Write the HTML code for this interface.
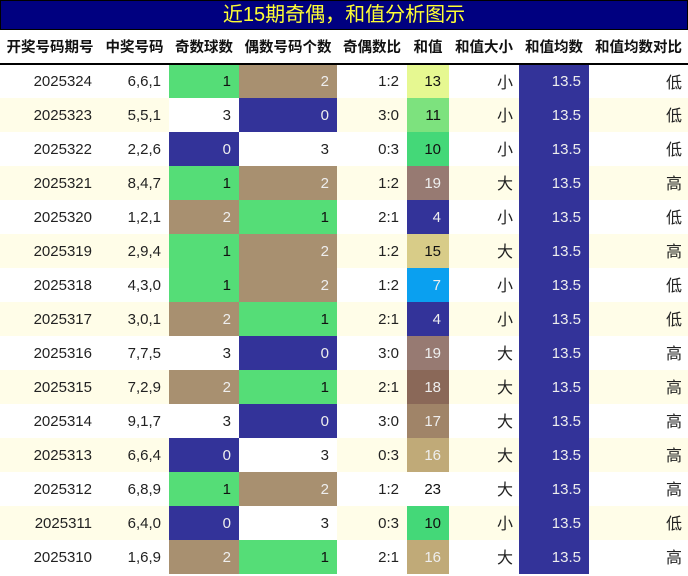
<!DOCTYPE html>
<html><head><meta charset="utf-8"><style>
*{margin:0;padding:0;box-sizing:border-box}
body{width:688px;height:576px;background:#fff;font-family:"Liberation Sans","Noto Sans CJK SC",sans-serif;overflow:hidden}
.title{height:30px;background:#000080;border:1px solid #000;color:#ffff33;font-size:20px;text-align:center;line-height:28px;padding-left:0}
table{border-collapse:collapse;table-layout:fixed;width:688px}
th{height:34px;font-size:14.5px;font-weight:bold;color:#111;border-bottom:2px solid #000;text-align:center;white-space:nowrap}
td{height:34px;font-size:15px;color:#222;text-align:right;padding-right:8px;white-space:nowrap}
tr.a td{background:#fffde8}
td.g{background:#55dd77 !important;color:#111}
td.t{background:#a89070 !important;color:#eee}
td.n{background:#333399 !important;color:#eee}
td.w{background:#fff !important}
td.cj{font-size:16px;padding-right:6px;padding-bottom:2px}
</style></head><body>
<div class="title">近15期奇偶，和值分析图示</div>
<table>
<colgroup><col style="width:100px"><col style="width:69px"><col style="width:70px"><col style="width:98px"><col style="width:70px"><col style="width:42px"><col style="width:70px"><col style="width:70px"><col style="width:99px"></colgroup>
<tr><th>开奖号码期号</th><th>中奖号码</th><th>奇数球数</th><th>偶数号码个数</th><th>奇偶数比</th><th>和值</th><th>和值大小</th><th>和值均数</th><th>和值均数对比</th></tr>
<tr><td>2025324</td><td>6,6,1</td><td class="g">1</td><td class="t">2</td><td>1:2</td><td style="background:#e6f891;color:#111">13</td><td class="cj">小</td><td class="n">13.5</td><td class="cj">低</td></tr>
<tr class="a"><td>2025323</td><td>5,5,1</td><td class="w">3</td><td class="n">0</td><td>3:0</td><td style="background:#7de27e;color:#111">11</td><td class="cj">小</td><td class="n">13.5</td><td class="cj">低</td></tr>
<tr><td>2025322</td><td>2,2,6</td><td class="n">0</td><td class="w">3</td><td>0:3</td><td style="background:#44d878;color:#111">10</td><td class="cj">小</td><td class="n">13.5</td><td class="cj">低</td></tr>
<tr class="a"><td>2025321</td><td>8,4,7</td><td class="g">1</td><td class="t">2</td><td>1:2</td><td style="background:#977a72;color:#eee">19</td><td class="cj">大</td><td class="n">13.5</td><td class="cj">高</td></tr>
<tr><td>2025320</td><td>1,2,1</td><td class="t">2</td><td class="g">1</td><td>2:1</td><td class="n">4</td><td class="cj">小</td><td class="n">13.5</td><td class="cj">低</td></tr>
<tr class="a"><td>2025319</td><td>2,9,4</td><td class="g">1</td><td class="t">2</td><td>1:2</td><td style="background:#d8cc88;color:#111">15</td><td class="cj">大</td><td class="n">13.5</td><td class="cj">高</td></tr>
<tr><td>2025318</td><td>4,3,0</td><td class="g">1</td><td class="t">2</td><td>1:2</td><td style="background:#0aa0f0;color:#eee">7</td><td class="cj">小</td><td class="n">13.5</td><td class="cj">低</td></tr>
<tr class="a"><td>2025317</td><td>3,0,1</td><td class="t">2</td><td class="g">1</td><td>2:1</td><td class="n">4</td><td class="cj">小</td><td class="n">13.5</td><td class="cj">低</td></tr>
<tr><td>2025316</td><td>7,7,5</td><td class="w">3</td><td class="n">0</td><td>3:0</td><td style="background:#977a72;color:#eee">19</td><td class="cj">大</td><td class="n">13.5</td><td class="cj">高</td></tr>
<tr class="a"><td>2025315</td><td>7,2,9</td><td class="t">2</td><td class="g">1</td><td>2:1</td><td style="background:#8a6858;color:#eee">18</td><td class="cj">大</td><td class="n">13.5</td><td class="cj">高</td></tr>
<tr><td>2025314</td><td>9,1,7</td><td class="w">3</td><td class="n">0</td><td>3:0</td><td style="background:#a08468;color:#eee">17</td><td class="cj">大</td><td class="n">13.5</td><td class="cj">高</td></tr>
<tr class="a"><td>2025313</td><td>6,6,4</td><td class="n">0</td><td class="w">3</td><td>0:3</td><td style="background:#c0aa78;color:#eee">16</td><td class="cj">大</td><td class="n">13.5</td><td class="cj">高</td></tr>
<tr><td>2025312</td><td>6,8,9</td><td class="g">1</td><td class="t">2</td><td>1:2</td><td style="color:#111">23</td><td class="cj">大</td><td class="n">13.5</td><td class="cj">高</td></tr>
<tr class="a"><td>2025311</td><td>6,4,0</td><td class="n">0</td><td class="w">3</td><td>0:3</td><td style="background:#44d878;color:#111">10</td><td class="cj">小</td><td class="n">13.5</td><td class="cj">低</td></tr>
<tr><td>2025310</td><td>1,6,9</td><td class="t">2</td><td class="g">1</td><td>2:1</td><td style="background:#c0aa78;color:#eee">16</td><td class="cj">大</td><td class="n">13.5</td><td class="cj">高</td></tr>
</table>
</body></html>
